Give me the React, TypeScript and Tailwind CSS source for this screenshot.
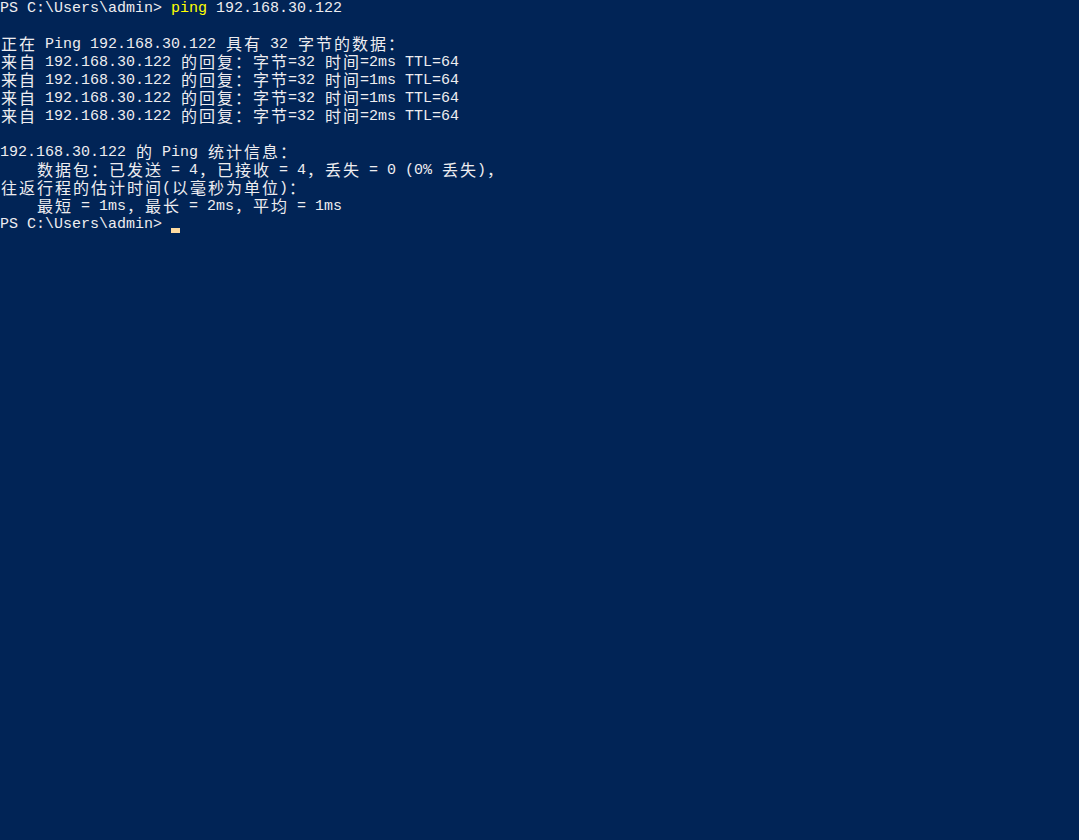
import React from "react"

type Seg = { text: string; color?: string }

const LINES: Seg[][] = [
    [{ text: "PS C:\\Users\\admin> " }, { text: "ping", color: "yellow" }, { text: " 192.168.30.122" }],
    [],
    [{ text: "正在 Ping 192.168.30.122 具有 32 字节的数据：" }],
    [{ text: "来自 192.168.30.122 的回复：字节=32 时间=2ms TTL=64" }],
    [{ text: "来自 192.168.30.122 的回复：字节=32 时间=1ms TTL=64" }],
    [{ text: "来自 192.168.30.122 的回复：字节=32 时间=1ms TTL=64" }],
    [{ text: "来自 192.168.30.122 的回复：字节=32 时间=2ms TTL=64" }],
    [],
    [{ text: "192.168.30.122 的 Ping 统计信息：" }],
    [{ text: "    数据包：已发送 = 4，已接收 = 4，丢失 = 0 (0% 丢失)，" }],
    [{ text: "往返行程的估计时间(以毫秒为单位)：" }],
    [{ text: "    最短 = 1ms，最长 = 2ms，平均 = 1ms" }],
]

const isWide = (ch: string) => ch.charCodeAt(0) > 0x2e80

// half-width runs stay as text, each wide (CJK) char gets a 2-column cell
function Cells({ text }: { text: string }) {
    const out: React.ReactNode[] = []
    let buf = ""
    Array.from(text).forEach((ch, i) => {
        if (isWide(ch)) {
            if (buf) {
                out.push(<span key={`t${i}`}>{buf}</span>)
                buf = ""
            }
            out.push(
                <span
                    key={`w${i}`}
                    className="inline-block align-top w-[18px] text-center text-[16px] leading-[15px] font-['Noto_Sans_CJK_SC',sans-serif]"
                >
                    {ch}
                </span>
            )
        } else {
            buf += ch
        }
    })
    if (buf) out.push(<span key="end">{buf}</span>)
    return <>{out}</>
}

export default function App() {
    return (
        <div className="w-full h-[840px] bg-[#012456] text-[#eeedf0] overflow-hidden">
            <div className="font-['Liberation_Mono',monospace] text-[15px] leading-[18px] whitespace-pre">
                {LINES.map((line, i) => (
                    <div key={i} className="h-[18px]">
                        {line.map((seg, j) => (
                            <span key={j} className={seg.color === "yellow" ? "text-[#ffff00]" : ""}>
                                <Cells text={seg.text} />
                            </span>
                        ))}
                    </div>
                ))}
                {/* prompt + cursor */}
                <div className="h-[18px] flex items-start">
                    <span>PS C:\Users\admin&gt; </span>
                    <span className="mt-[12px] w-[9px] h-[5px] bg-[#fedba0]" />
                </div>
            </div>
        </div>
    )
}
